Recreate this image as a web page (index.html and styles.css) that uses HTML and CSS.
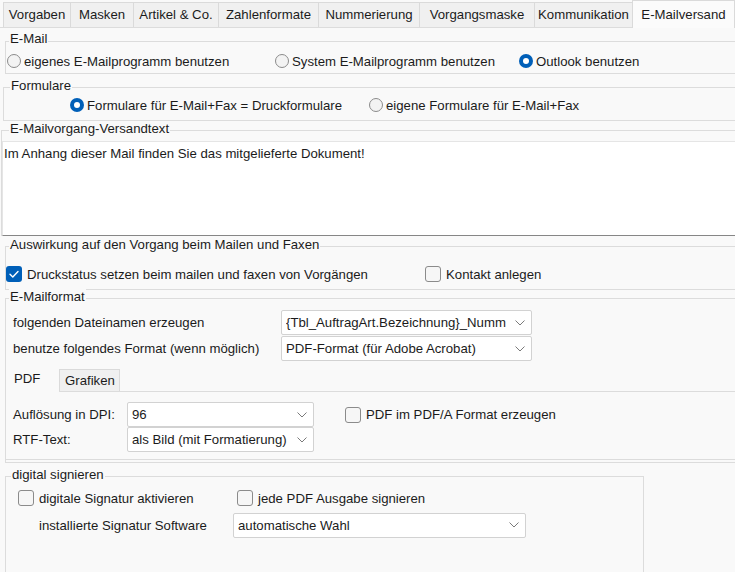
FILE: index.html
```html
<!DOCTYPE html>
<html lang="de">
<head>
<meta charset="utf-8">
<title>E-Mailversand</title>
<link rel="stylesheet" href="styles.css">
</head>
<body>
<div class="tabs">
  <div class="tab t1">Vorgaben</div>
  <div class="tab t2">Masken</div>
  <div class="tab t3">Artikel &amp; Co.</div>
  <div class="tab t4">Zahlenformate</div>
  <div class="tab t5">Nummerierung</div>
  <div class="tab t6">Vorgangsmaske</div>
  <div class="tab t7">Kommunikation</div>
  <div class="tab t8 active">E-Mailversand</div>
</div>
<div class="page">
  <div class="grp g-mail">
    <div class="grp-title">E-Mail</div>
    <div class="row">
      <div class="opt m1"><span class="radio"></span>eigenes E-Mailprogramm benutzen</div>
      <div class="opt m2"><span class="radio"></span>System E-Mailprogramm benutzen</div>
      <div class="opt"><span class="radio on"></span>Outlook benutzen</div>
    </div>
  </div>

  <div class="grp g-form">
    <div class="grp-title">Formulare</div>
    <div class="row">
      <div class="opt f1"><span class="radio on"></span>Formulare für E-Mail+Fax = Druckformulare</div>
      <div class="opt"><span class="radio"></span>eigene Formulare für E-Mail+Fax</div>
    </div>
  </div>

  <div class="grp g-text">
    <div class="grp-title">E-Mailvorgang-Versandtext</div>
    <div class="textarea">Im Anhang dieser Mail finden Sie das mitgelieferte Dokument!</div>
  </div>

  <div class="grp g-ausw">
    <div class="grp-title">Auswirkung auf den Vorgang beim Mailen und Faxen</div>
    <div class="row">
      <div class="opt c-gap a1"><span class="check on"><svg viewBox="0 0 16 16" width="16" height="16"><path d="M4 8.2 L6.8 11 L12 5.4" fill="none" stroke="#fff" stroke-width="1.4" stroke-linecap="round" stroke-linejoin="round"/></svg></span>Druckstatus setzen beim mailen und faxen von Vorgängen</div>
      <div class="opt c-gap"><span class="check"></span>Kontakt anlegen</div>
    </div>
  </div>

  <div class="grp g-fmt">
    <div class="grp-title">E-Mailformat</div>
    <div class="frow first">
      <div class="flabel">folgenden Dateinamen erzeugen</div>
      <div class="combo c-wide"><span class="ctext">{Tbl_AuftragArt.Bezeichnung}_Numm</span><svg class="chev" viewBox="0 0 10 6" width="10" height="6"><path d="M0.5 0.5 L5 5 L9.5 0.5" fill="none" stroke="#7a7a7a" stroke-width="1"/></svg></div>
    </div>
    <div class="frow">
      <div class="flabel">benutze folgendes Format (wenn möglich)</div>
      <div class="combo c-wide"><span class="ctext">PDF-Format (für Adobe Acrobat)</span><svg class="chev" viewBox="0 0 10 6" width="10" height="6"><path d="M0.5 0.5 L5 5 L9.5 0.5" fill="none" stroke="#7a7a7a" stroke-width="1"/></svg></div>
    </div>

    <div class="itabs">
      <div class="itab active">PDF</div>
      <div class="itab">Grafiken</div>
    </div>
    <div class="ipanel">
      <div class="prow">
        <div class="plabel">Auflösung in DPI:</div>
        <div class="combo c-small"><span class="ctext">96</span><svg class="chev" viewBox="0 0 10 6" width="10" height="6"><path d="M0.5 0.5 L5 5 L9.5 0.5" fill="none" stroke="#7a7a7a" stroke-width="1"/></svg></div>
        <div class="opt c-gap pdfa"><span class="check"></span>PDF im PDF/A Format erzeugen</div>
      </div>
      <div class="prow">
        <div class="plabel">RTF-Text:</div>
        <div class="combo c-small"><span class="ctext">als Bild (mit Formatierung)</span><svg class="chev" viewBox="0 0 10 6" width="10" height="6"><path d="M0.5 0.5 L5 5 L9.5 0.5" fill="none" stroke="#7a7a7a" stroke-width="1"/></svg></div>
      </div>
    </div>
  </div>

  <div class="grp g-sig">
    <div class="grp-title">digital signieren</div>
    <div class="row">
      <div class="opt c-gap s1"><span class="check"></span>digitale Signatur aktivieren</div>
      <div class="opt c-gap"><span class="check"></span>jede PDF Ausgabe signieren</div>
    </div>
    <div class="srow">
      <div class="slabel">installierte Signatur Software</div>
      <div class="combo c-sig"><span class="ctext">automatische Wahl</span><svg class="chev" viewBox="0 0 10 6" width="10" height="6"><path d="M0.5 0.5 L5 5 L9.5 0.5" fill="none" stroke="#7a7a7a" stroke-width="1"/></svg></div>
    </div>
  </div>
</div>
</body>
</html>
```

FILE: styles.css
```css
* { box-sizing: border-box; }

html, body {
  margin: 0;
  padding: 0;
}

body {
  width: 735px;
  height: 572px;
  overflow: hidden;
  background: #f9f9f9;
  font-family: "Liberation Sans", Arial, sans-serif;
  font-size: 13.2px;
  color: #1b1b1b;
}

/* top tab strip */
.tabs {
  display: flex;
  height: 28px;
  padding-left: 3px;
  align-items: flex-end;
  border-bottom: 1px solid #dcdcdc;
  background: #f9f9f9;
}

.tab {
  height: 25px;
  line-height: 23px;
  text-align: center;
  background: #f0f0f0;
  border: 1px solid #dadada;
  border-bottom: none;
  margin-right: -1px;
  white-space: nowrap;
}

.t1 { width: 68px; }
.t2 { width: 64px; }
.t3 { width: 86px; }
.t4 { width: 101px; }
.t5 { width: 102px; }
.t6 { width: 116px; }
.t7 { width: 99px; }
.t8 { width: 103px; }

.tab.active {
  height: 28px;
  line-height: 27px;
  background: #fbfbfb;
  margin-bottom: -1px;
  position: relative;
}

.page {
  width: 760px;
}

/* group boxes */
.grp {
  margin-left: 5px;
  width: 760px;
  border: 1px solid #dcdcdc;
  border-right: none;
}

.grp-title {
  margin-top: -10px;
  margin-left: 3px;
  padding: 0 1px;
  height: 15px;
  line-height: 15px;
  width: fit-content;
  background: #f9f9f9;
}

.row {
  display: flex;
  align-items: center;
  height: 16px;
}

.opt {
  display: flex;
  align-items: center;
  white-space: nowrap;
  height: 16px;
}

.radio {
  width: 14px;
  height: 14px;
  border: 1px solid #8b8b8b;
  border-radius: 50%;
  background: #f3f3f3;
  margin-right: 3px;
  flex: none;
  display: flex;
  align-items: center;
  justify-content: center;
}

.radio.on {
  border: none;
  background: #005fb8;
}

.radio.on::after {
  content: "";
  width: 6px;
  height: 6px;
  border-radius: 50%;
  background: #fff;
}

.check {
  width: 16px;
  height: 16px;
  border: 1px solid #8b8b8b;
  border-radius: 3px;
  background: #f6f6f6;
  flex: none;
  margin-right: 5px;
  display: flex;
}

.check.on {
  border: none;
  background: #005fb8;
}

/* E-Mail group */
.g-mail {
  margin-top: 13px;
  padding-bottom: 4px;
}
.g-mail .grp-title { margin-top: -11px; }
.g-mail .row { margin-top: 7px; }
.m1 { width: 268px; margin-left: 1px; }
.m2 { width: 244px; }

/* Formulare */
.g-form {
  margin-top: 13px;
  margin-left: 3px;
  padding-bottom: 7px;
}
.g-form .grp-title { margin-left: 6px; }
.g-form .row { margin-top: 4px; }
.f1 { width: 299px; margin-left: 66px; }

/* Versandtext */
.g-text {
  margin-top: 9px;
  margin-left: 1px;
  border-bottom: none;
}
.g-text .grp-title { margin-left: 7px; }

.textarea {
  margin-top: 5px;
  height: 95px;
  background: #ffffff;
  border-top: 1px solid #e5e5e5;
  border-left: 1px solid #e5e5e5;
  border-bottom: 1px solid #868686;
  padding: 4px 0 0 1px;
  line-height: 16px;
}

/* Auswirkung */
.g-ausw {
  margin-top: 10px;
  padding-bottom: 7px;
}
.g-ausw .row { margin-top: 14px; }
.a1 { width: 419px; }

/* E-Mailformat */
.g-fmt {
  margin-top: 8px;
  padding-bottom: 2px;
}

.frow {
  display: flex;
  align-items: center;
  height: 25px;
  margin-top: 1px;
}
.frow.first { margin-top: 6px; }

.flabel {
  width: 275px;
  padding-left: 7px;
  white-space: nowrap;
}

.combo {
  height: 25px;
  background: #ffffff;
  border: 1px solid #d2d2d2;
  border-radius: 2px;
  display: flex;
  align-items: center;
  padding: 0 6px 0 4px;
  overflow: hidden;
  flex: none;
}

.ctext {
  flex: 1;
  white-space: nowrap;
  overflow: hidden;
}

.chev {
  flex: none;
  margin-left: 6px;
}

.c-wide { width: 251px; }
.c-small { width: 187px; }
.c-sig { width: 293px; }

/* inner tabs */
.itabs {
  display: flex;
  align-items: flex-end;
  height: 23px;
  margin-top: 7px;
}

.itab {
  height: 22px;
  line-height: 21px;
  padding-left: 5px;
  background: #f0f0f0;
  border: 1px solid #dadada;
  border-bottom: none;
  width: 61px;
}

.itab.active {
  width: 53px;
  height: 25px;
  line-height: 21px;
  padding-left: 7px;
  background: #f9f9f9;
  border-color: transparent;
  margin-bottom: -1px;
  position: relative;
}

.ipanel {
  border-top: 1px solid #dcdcdc;
  border-bottom: 1px solid #dcdcdc;
  height: 69px;
  padding-top: 10px;
}

.prow {
  display: flex;
  align-items: center;
  height: 25px;
}

.plabel {
  width: 121px;
  padding-left: 7px;
  white-space: nowrap;
}

.pdfa { margin-left: 31px; }

/* digital signieren */
.g-sig {
  margin-top: 13px;
  width: 639px;
  border-right: 1px solid #dcdcdc;
  height: 120px;
}
.g-sig .grp-title { margin-left: 5px; }
.g-sig .row { margin-top: 8px; }
.s1 { width: 219px; margin-left: 12px; }

.srow {
  display: flex;
  align-items: center;
  height: 26px;
  margin-top: 6px;
}

.slabel {
  width: 227px;
  padding-left: 33px;
  white-space: nowrap;
}
```
